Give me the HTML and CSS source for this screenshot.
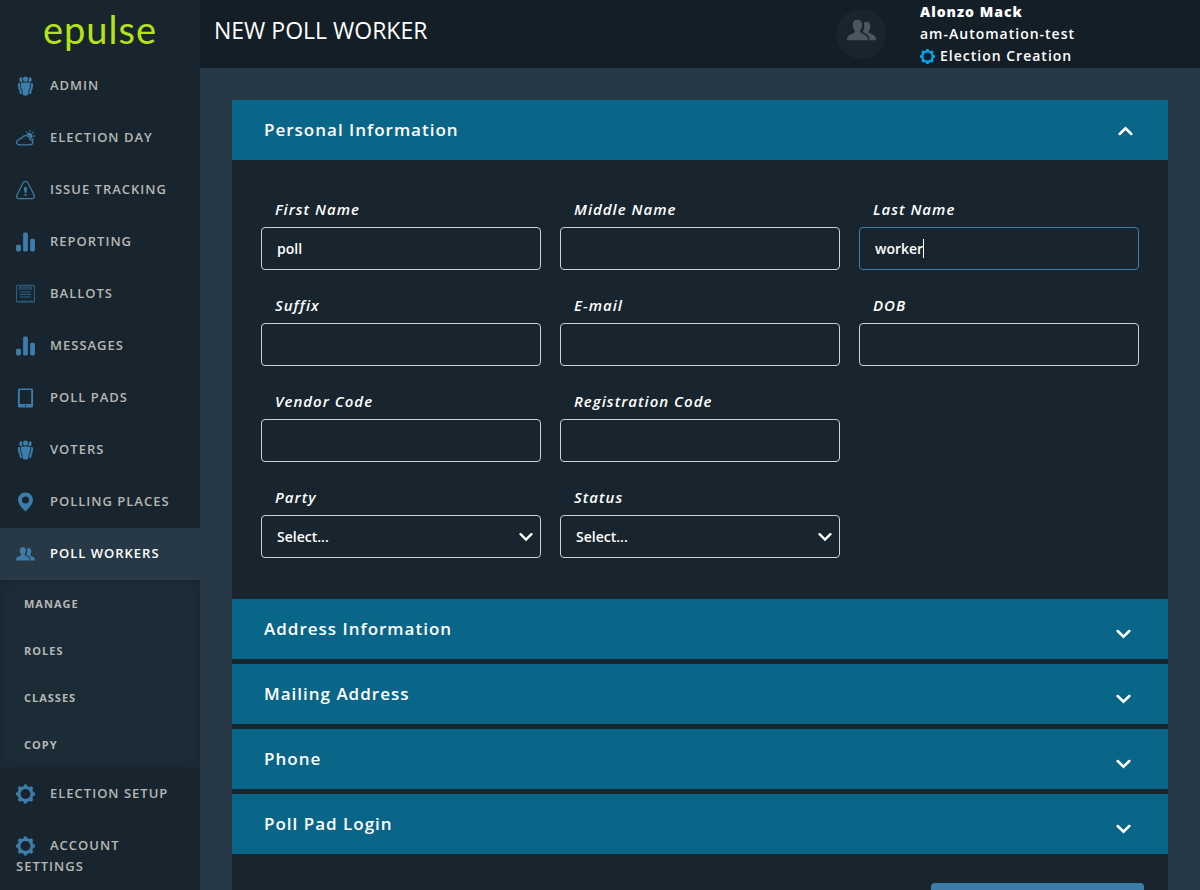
FILE: index.html
```html
<!DOCTYPE html>
<html lang="en">
<head>
<meta charset="utf-8">
<meta name="viewport" content="width=device-width, initial-scale=1">
<title>New Poll Worker</title>
<link rel="stylesheet" href="styles.css">
</head>
<body>
<svg class="sprite" aria-hidden="true">
  <symbol id="i-group" viewBox="0 0 20 20">
    <path d="M5.2.8c1 0 1.300.6 1.500 1.200-.4 1.100-.2 2.200.5 3-.4.5-.9.9-1.700.9C4.200 5.900 3.500 4.700 3.500 3.400S4.100.8 5.200.8zM14.800.8c-1 0-1.300.6-1.500 1.200.4 1.100.2 2.200-.5 3 .4.500.9.9 1.700.9 1.300 0 2-1.200 2-2.500S15.900.8 14.800.8z"/>
    <ellipse cx="10" cy="2.700" rx="2.700" ry="2.700"/>
    <path d="M6.200 6.300h7.600c.7 0 1.100.5 1.100 1.200l-.3 4.500c-.1.800-.6 1-1.100 1l-.4 5c-.1 1.300-.8 2-1.800 2H8.700c-1 0-1.700-.7-1.800-2l-.4-5c-.5 0-1-.2-1.100-1l-.3-4.500c0-.7.4-1.200 1.100-1.200z"/>
    <path d="M4.300 6.800H3.500C2.500 6.800 2 7.400 2 8.300l.6 5 .9.600.3 3.500c.1.800.6 1.100 1.200 1.100h1.100l-.4-4.900c-.8-.3-1-.8-1.100-1.600zM15.700 6.800h.8c1 0 1.500.6 1.500 1.500l-.6 5-.9.600-.3 3.500c-.1.800-.6 1.100-1.200 1.100h-1.100l.4-4.900c.8-.3 1-.8 1.100-1.600z"/>
  </symbol>
  <symbol id="i-weather" viewBox="0 0 20 20">
    <path d="M4.600 17.200h9.700c2 0 3.400-1.200 3.400-2.800 0-1.600-1.300-2.800-3.100-2.800-.3-2.300-2-4-4.400-4-2 0-3.400 1-4.100 2.700-1.500-.3-2.600.4-3 1.600C1.600 12 .6 13.100.6 14.600c0 1.600 1.500 2.600 4 2.600z" fill="none" stroke="currentColor" stroke-width="1.300"/>
    <path d="M11 6.700c.7-1.500 1.900-2.200 3.300-2.100 2 .2 3.300 1.900 3.100 3.800-.1 1.200-.8 2.200-1.700 2.700-.6-2.300-2.200-4-4.700-4.400z"/>
    <path d="M14.500 1.700v2M10.700 3.300l1.100 1.400M18.600 3.500l-1.500 1.400M20 8h-2M18.800 12l-1.500-1.200" stroke="currentColor" stroke-width="1.200"/>
  </symbol>
  <symbol id="i-alert" viewBox="0 0 20 20">
    <path d="M10 .9c1.100 0 1.900.5 2.500 1.500l6.400 12.500c1 2.100.2 4.200-2.200 4.200H3.300c-2.400 0-3.200-2.100-2.200-4.200L7.500 2.400C8.100 1.400 8.900.9 10 .9z" fill="none" stroke="currentColor" stroke-width="1.300"/>
    <path d="M8.300 7h3.400l-.6 6H8.900z"/><circle cx="10" cy="15.200" r="1.200"/>
  </symbol>
  <symbol id="i-chart" viewBox="0 0 20 20">
    <rect x=".1" y="13" width="5" height="7" rx="1.500"/><rect x="7.500" y="0" width="5" height="20" rx="1.500"/><rect x="14.900" y="6.700" width="5" height="13.300" rx="1.500"/>
  </symbol>
  <symbol id="i-ballot" viewBox="0 0 20 20">
    <path d="M.6 18V2.200C.6 1.200 1.200.700 2 .7h16c.8 0 1.400.5 1.400 1.500V18M3.500 2.700h13v2h-13zM4 7.800h12M4 10.500h12M4 13.200h12" fill="none" stroke="currentColor" stroke-width="1.100"/>
    <path d="M.4 18.300h19.200M4 16.800v1.500M7 16.800v1.500M10 16.800v1.500M13 16.800v1.500M16 16.800v1.500" fill="none" stroke="currentColor" stroke-width="1.100"/>
  </symbol>
  <symbol id="i-tablet" viewBox="0 0 20 20">
    <path fill-rule="evenodd" d="M4 0h12c1.200 0 2 .7 2 1.700v16.600c0 1-.8 1.700-2 1.700H4c-1.200 0-2-.7-2-1.700V1.700C2 .7 2.800 0 4 0zM4 1.700v14.500h12V1.700zM10 17.300a.8.8 0 1 0 0 1.600.8.8 0 0 0 0-1.600z"/>
  </symbol>
  <symbol id="i-pin" viewBox="0 0 20 20">
    <path fill-rule="evenodd" d="M10 0c4.500 0 7.800 3.300 7.800 7.600 0 4.600-4.300 9-7.800 12.400C6.500 16.600 2.200 12.200 2.200 7.600 2.200 3.300 5.500 0 10 0zM10 4.100a3.700 3.700 0 1 0 0 7.400 3.700 3.700 0 0 0 0-7.400z"/>
  </symbol>
  <symbol id="i-users" viewBox="0 0 20 20">
    <path d="M7.200 2.500c2 0 3.200 1.300 3.200 3.600 0 1.600-.5 3-1.300 3.700V11c0 1 3.800 1.700 4.700 3.100.5.700.6 1.500.6 2.700H0c0-1.200.1-2 .6-2.700.9-1.400 4.700-2.100 4.700-3.100V9.800C4.500 9.100 4 7.700 4 6.100c0-2.300 1.200-3.600 3.200-3.600z"/>
    <path d="M13.400 4c1.800 0 2.700 1.200 2.700 3.100 0 1.300-.4 2.400-1.100 3.100v.9c0 1 3.300 1.600 4.300 2.900.5.700.7 1.600.7 2.800h-4.600c0-3-.9-4-3.600-5.200-.6-.3-.9-.6-.9-.9.8-1.200 1.100-2.800 1-4.400-.1-.6-.2-1.100-.4-1.500.5-.5 1.100-.8 1.900-.8z"/>
  </symbol>
  <symbol id="i-gear" viewBox="0 0 20 20">
    <circle cx="10" cy="10" r="6.900" fill="none" stroke="currentColor" stroke-width="3.200"/>
    <path d="M10 0v3.500M10 16.500V20M0 10h3.500M16.500 10H20M2.800 2.800l2.700 2.700M14.500 14.500l2.700 2.700M17.200 2.800l-2.700 2.700M5.500 14.500l-2.700 2.700" stroke="currentColor" stroke-width="3.400" fill="none"/>
  </symbol>
  <symbol id="i-down" viewBox="0 0 16 10">
    <path d="M1.800 1.800L8 7.900l6.200-6.100" fill="none" stroke="currentColor" stroke-width="2.700" stroke-linecap="round"/>
  </symbol>
  <symbol id="i-up" viewBox="0 0 16 10">
    <path d="M1.800 8.200L8 2.100l6.200 6.100" fill="none" stroke="currentColor" stroke-width="2.700" stroke-linecap="round"/>
  </symbol>
</svg>

<div class="app">
  <aside class="sidebar">
    <a class="logo" href="#">epulse</a>
    <nav aria-label="Main">
      <a class="nav-item" href="#"><svg class="nav-icon"><use href="#i-group"/></svg>ADMIN</a>
      <a class="nav-item" href="#"><svg class="nav-icon"><use href="#i-weather"/></svg>ELECTION DAY</a>
      <a class="nav-item" href="#"><svg class="nav-icon"><use href="#i-alert"/></svg>ISSUE TRACKING</a>
      <a class="nav-item" href="#"><svg class="nav-icon"><use href="#i-chart"/></svg>REPORTING</a>
      <a class="nav-item" href="#"><svg class="nav-icon nav-icon-dim"><use href="#i-ballot"/></svg>BALLOTS</a>
      <a class="nav-item" href="#"><svg class="nav-icon"><use href="#i-chart"/></svg>MESSAGES</a>
      <a class="nav-item" href="#"><svg class="nav-icon"><use href="#i-tablet"/></svg>POLL PADS</a>
      <a class="nav-item" href="#"><svg class="nav-icon"><use href="#i-group"/></svg>VOTERS</a>
      <a class="nav-item" href="#"><svg class="nav-icon"><use href="#i-pin"/></svg>POLLING PLACES</a>
      <a class="nav-item active" href="#" aria-current="page"><svg class="nav-icon"><use href="#i-users"/></svg>POLL WORKERS</a>
      <div class="subnav">
        <a href="#">MANAGE</a>
        <a href="#">ROLES</a>
        <a href="#">CLASSES</a>
        <a href="#">COPY</a>
      </div>
      <a class="nav-item" href="#"><svg class="nav-icon"><use href="#i-gear"/></svg>ELECTION SETUP</a>
      <a class="nav-item" href="#"><svg class="nav-icon"><use href="#i-gear"/></svg>ACCOUNT SETTINGS</a>
    </nav>
  </aside>

  <div class="page">
    <header class="topbar">
      <h1>NEW POLL WORKER</h1>
      <div class="account">
        <span class="avatar"><svg><use href="#i-users"/></svg></span>
        <div class="account-text">
          <strong>Alonzo Mack</strong>
          <span>am-Automation-test</span>
          <span class="election"><svg><use href="#i-gear"/></svg>Election Creation</span>
        </div>
      </div>
    </header>

    <main class="content">
      <form class="panel">
        <section>
          <h2><button class="bar" type="button" aria-expanded="true">Personal Information<svg class="chevron up"><use href="#i-up"/></svg></button></h2>
          <div class="fields">
            <div class="field"><label for="first">First Name</label><input id="first" type="text" value="poll"></div>
            <div class="field"><label for="middle">Middle Name</label><input id="middle" type="text"></div>
            <div class="field"><label for="last">Last Name</label><input id="last" class="focused" type="text" value="worker"></div>
            <div class="field"><label for="suffix">Suffix</label><input id="suffix" type="text"></div>
            <div class="field"><label for="email">E-mail</label><input id="email" type="email"></div>
            <div class="field"><label for="dob">DOB</label><input id="dob" type="text"></div>
            <div class="field"><label for="vendor">Vendor Code</label><input id="vendor" type="text"></div>
            <div class="field"><label for="registration">Registration Code</label><input id="registration" type="text"></div>
            <div class="field first-col"><label for="party">Party</label><div class="select"><select id="party"><option>Select...</option></select><svg><use href="#i-down"/></svg></div></div>
            <div class="field"><label for="status">Status</label><div class="select"><select id="status"><option>Select...</option></select><svg><use href="#i-down"/></svg></div></div>
          </div>
        </section>
        <div class="collapsed">
          <h2><button class="bar" type="button" aria-expanded="false">Address Information<svg class="chevron"><use href="#i-down"/></svg></button></h2>
          <h2><button class="bar" type="button" aria-expanded="false">Mailing Address<svg class="chevron"><use href="#i-down"/></svg></button></h2>
          <h2><button class="bar" type="button" aria-expanded="false">Phone<svg class="chevron"><use href="#i-down"/></svg></button></h2>
          <h2><button class="bar" type="button" aria-expanded="false">Poll Pad Login<svg class="chevron"><use href="#i-down"/></svg></button></h2>
        </div>
        <div class="actions"><button class="save" type="submit" aria-label="Save"></button></div>
      </form>
    </main>
  </div>
</div>
</body>
</html>
```
FILE: styles.css
```css
* {
  box-sizing: border-box;
}

body {
  margin: 0;
  background: #273947;
  color: #fff;
  font: 600 15px/22px "Open Sans", "Noto Sans", sans-serif;
}

a {
  color: inherit;
  text-decoration: none;
}

svg {
  fill: currentColor;
}

.sprite {
  display: none;
}

.app {
  display: flex;
  height: 100vh;
  overflow: hidden;
}

/* Sidebar */
.sidebar {
  flex: 0 0 200px;
  background: #18252e;
  color: #b7b7b5;
  font-size: 13px;
  line-height: 20px;
  letter-spacing: 1px;
}

.logo {
  display: block;
  height: 60px;
  color: #b4e319;
  font: 400 38px/58px Lato, sans-serif;
  text-align: center;
}

.nav-item {
  display: block;
  padding: 15px 16px 16px;
}

.nav-item.active {
  background: #273947;
  color: #fff;
}

.nav-icon {
  width: 19px;
  height: 20px;
  margin-right: 15px;
  color: #3d7da9;
  vertical-align: -6px;
}

.nav-icon-dim {
  color: #2d6388;
}

.subnav {
  background: #1c2c37;
  box-shadow: inset 0 0 10px #18252e;
  font-size: 11px;
  font-weight: 700;
}

.subnav a {
  display: block;
  padding: 14px 24px 13px;
}

/* Top bar */
.page {
  display: flex;
  flex: 1;
  flex-direction: column;
  min-width: 0;
}

.topbar {
  display: flex;
  flex: none;
  justify-content: space-between;
  height: 68px;
  padding-left: 14px;
  background: #141e27;
}

h1 {
  margin: 0;
  font-size: 23px;
  font-weight: 400;
  line-height: 60px;
}

.account {
  display: flex;
  flex: 0 0 364px;
  gap: 34px;
  font-size: 14px;
  letter-spacing: 1px;
}

.avatar {
  display: grid;
  place-items: center;
  width: 50px;
  height: 50px;
  margin-top: 9px;
  padding-bottom: 8px;
  border-radius: 50%;
  background: #18252e;
  color: #4d5660;
}

.avatar svg {
  width: 29px;
  height: 29px;
}

.account-text {
  display: flex;
  flex-direction: column;
  padding-top: 1px;
}

.account-text strong {
  font-weight: 800;
}

.election {
  display: flex;
  align-items: center;
  gap: 5px;
}

.election svg {
  width: 15px;
  height: 15px;
  color: #00a8ec;
}

/* Form panel */
.content {
  flex: 1;
  min-height: 0;
  padding: 32px 32px 0;
  overflow-y: auto;
  scrollbar-width: none;
}

.panel {
  background: #18252e;
}

h2 {
  margin: 0;
}

.bar {
  display: flex;
  align-items: center;
  justify-content: space-between;
  width: 100%;
  height: 60px;
  padding: 0 37px 0 32px;
  border: 0;
  background: #096689;
  color: #fff;
  font: 600 17px/60px "Open Sans", "Noto Sans", sans-serif;
  letter-spacing: 1px;
  text-align: left;
}

.chevron {
  width: 15px;
  height: 10px;
  margin-top: 9px;
}

.chevron.up {
  margin-top: 1px;
  margin-right: -2px;
}

.fields {
  display: grid;
  grid-template-columns: repeat(3, 1fr);
  gap: 24px 19px;
  padding: 38px 29px 41px;
}

.first-col {
  grid-column-start: 1;
}

.field {
  display: grid;
  gap: 7px;
}

.field label {
  margin-left: 14px;
  font-style: italic;
  letter-spacing: 1px;
}

input,
select {
  display: block;
  width: 100%;
  height: 43px;
  padding: 0 15px;
  border: 1px solid #d0d0ce;
  border-radius: 4px;
  outline: 0;
  background: transparent;
  color: #fff;
  font: 600 14px/22px "Open Sans", "Noto Sans", sans-serif;
  appearance: none;
}

/* Active field with its text cursor */
.focused {
  border-color: #3d7da9;
  background: linear-gradient(#fff, #fff) 63px center / 1px 19px no-repeat;
}

.select {
  position: relative;
}

.select svg {
  position: absolute;
  top: 17px;
  right: 8px;
  width: 14px;
  height: 10px;
  pointer-events: none;
}

.collapsed {
  display: grid;
  gap: 5px;
}

.actions {
  display: flex;
  justify-content: flex-end;
  padding: 29px 24px 32px;
}

.save {
  width: 213px;
  height: 48px;
  border: 0;
  border-radius: 4px;
  background: #3d7da9;
}
```
